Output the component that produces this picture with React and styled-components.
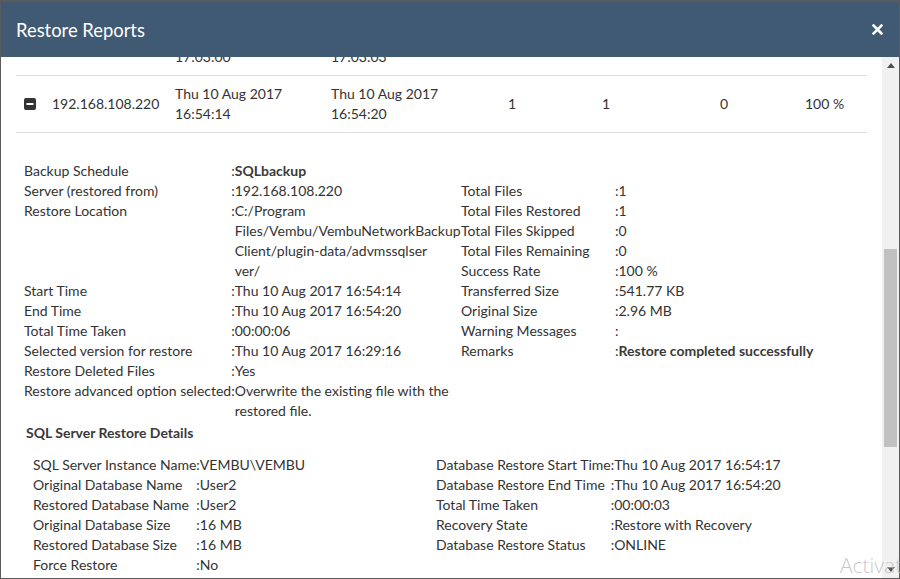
import React from "react";
import styled, { createGlobalStyle } from "styled-components";

const Global = createGlobalStyle`
  html, body { margin: 0; padding: 0; background: #5b5b5b; }
  body { font-family: Lato, "Open Sans", sans-serif; }
`;

const Page = styled.div`
  position: relative;
  width: 900px;
  height: 579px;
  overflow: hidden;
  background: #5b5b5b;
`;

const Modal = styled.div`
  margin: 2px 1px 0 1px;
  height: 576px;
  display: flex;
  flex-direction: column;
  background: #fff;
`;

const Header = styled.div`
  height: 55px;
  flex: none;
  background: #3f5a72;
  display: flex;
  align-items: center;
  justify-content: space-between;
  padding: 0 15px 0 15px;
  box-sizing: border-box;
`;

const Title = styled.h1`
  margin: 0;
  font-family: Lato, sans-serif;
  font-weight: 400;
  font-size: 18.4px;
  color: #fff;
`;

const CloseButton = styled.button`
  border: 0;
  background: none;
  padding: 0;
  width: 14px;
  height: 14px;
  display: flex;
  align-items: center;
  justify-content: center;
  cursor: pointer;
`;

const Body = styled.div`
  flex: 1;
  display: flex;
  overflow: hidden;
  min-height: 0;
`;

const Content = styled.div`
  flex: 1;
  overflow: hidden;
  padding: 0 15px;
  color: #333;
  font-size: 14px;
  line-height: 20px;
`;

const Scrolled = styled.div`
  margin-top: -39px;
`;

const ScrollTrack = styled.div`
  width: 17px;
  flex: none;
  background: #f1f1f1;
  display: flex;
  flex-direction: column;
  align-items: center;
`;

const ArrowBtn = styled.div`
  height: 17px;
  width: 17px;
  display: flex;
  align-items: center;
  justify-content: center;
  flex: none;
`;

const Thumb = styled.div`
  margin-top: 175px;
  width: 13px;
  height: 198px;
  background: #c1c1c1;
  flex: none;
`;

const Spacer = styled.div`
  flex: 1;
`;

const Row = styled.div`
  display: grid;
  grid-template-columns: 36px 123px 156px 177px 94px 118px 85px 1fr;
  border-top: 1px solid #dddddd;
  padding: 8px 0;
  align-items: center;
  &:last-child {
    border-bottom: 1px solid #dddddd;
  }
`;

const IconCell = styled.div`
  padding-left: 8px;
  display: flex;
  align-items: center;
`;

const Cell = styled.div`
  white-space: nowrap;
`;

const Details = styled.div`
  margin-top: 28px;
  padding-left: 8px;
  display: grid;
  grid-template-columns: 437px 1fr;
`;

const KV = styled.div`
  display: grid;
  grid-template-columns: ${(p) => p.$label || "max-content"} max-content max-content;
  align-content: start;
  padding-top: ${(p) => p.$offset || 0}px;
`;

const Label = styled.div`
  white-space: nowrap;
`;

const Colon = styled.div``;

const Value = styled.div`
  white-space: nowrap;
  font-weight: ${(p) => (p.$strong ? 700 : 400)};
  color: ${(p) => (p.$strong ? "#3a3a3a" : "inherit")};
`;

const SectionTitle = styled.div`
  margin-top: 2px;
  padding-left: 10px;
  font-weight: 700;
  color: #3a3a3a;
`;

const SubGrid = styled.div`
  margin-top: 12px;
  padding-left: 17px;
  display: grid;
  grid-template-columns: 403px 1fr;
`;

const Watermark = styled.div`
  position: absolute;
  left: 840px;
  top: 551px;
  font-family: "Open Sans", sans-serif;
  font-weight: 300;
  font-size: 21px;
  color: rgba(190, 190, 190, 0.85);
  white-space: nowrap;
  pointer-events: none;
`;

const MinusIcon = () => (
  <svg width="12" height="12" viewBox="0 0 12 12">
    <rect x="0" y="0" width="12" height="12" rx="2" fill="#333" />
    <rect x="2.5" y="5" width="7" height="2" fill="#fff" />
  </svg>
);

const PlusIcon = () => (
  <svg width="12" height="12" viewBox="0 0 12 12">
    <rect x="0" y="0" width="12" height="12" rx="2" fill="#333" />
    <rect x="2.5" y="5" width="7" height="2" fill="#fff" />
    <rect x="5" y="2.5" width="2" height="7" fill="#fff" />
  </svg>
);

const rows = [
  { open: false, ip: "192.168.108.220", start: ["Thu 10 Aug 2017", "17:03:00"], end: ["Thu 10 Aug 2017", "17:03:03"], a: "1", b: "1", c: "0", rate: "100 %" },
  { open: true, ip: "192.168.108.220", start: ["Thu 10 Aug 2017", "16:54:14"], end: ["Thu 10 Aug 2017", "16:54:20"], a: "1", b: "1", c: "0", rate: "100 %" },
];

const mainLeft = [
  ["Backup Schedule", "SQLbackup", true],
  ["Server (restored from)", "192.168.108.220"],
  ["Restore Location", ["C:/Program", "Files/Vembu/VembuNetworkBackup", "Client/plugin-data/advmssqlser", "ver/"]],
  ["Start Time", "Thu 10 Aug 2017 16:54:14"],
  ["End Time", "Thu 10 Aug 2017 16:54:20"],
  ["Total Time Taken", "00:00:06"],
  ["Selected version for restore", "Thu 10 Aug 2017 16:29:16"],
  ["Restore Deleted Files", "Yes"],
  ["Restore advanced option selected", ["Overwrite the existing file with the", "restored file."]],
];

const mainRight = [
  ["Total Files", "1"],
  ["Total Files Restored", "1"],
  ["Total Files Skipped", "0"],
  ["Total Files Remaining", "0"],
  ["Success Rate", "100 %"],
  ["Transferred Size", "541.77 KB"],
  ["Original Size", "2.96 MB"],
  ["Warning Messages", ""],
  ["Remarks", "Restore completed successfully", true],
];

const subLeft = [
  ["SQL Server Instance Name", "VEMBU\\VEMBU"],
  ["Original Database Name", "User2"],
  ["Restored Database Name", "User2"],
  ["Original Database Size", "16 MB"],
  ["Restored Database Size", "16 MB"],
  ["Force Restore", "No"],
];

const subRight = [
  ["Database Restore Start Time", "Thu 10 Aug 2017 16:54:17"],
  ["Database Restore End Time", "Thu 10 Aug 2017 16:54:20"],
  ["Total Time Taken", "00:00:03"],
  ["Recovery State", "Restore with Recovery"],
  ["Database Restore Status", "ONLINE"],
];

const KVTable = ({ items, label, offset }) => (
  <KV $label={label} $offset={offset}>
    {items.map(([k, v, strong]) => (
      <React.Fragment key={k}>
        <Label>{k}</Label>
        <Colon>:</Colon>
        <Value $strong={strong}>
          {Array.isArray(v)
            ? v.map((line, i) => (
                <React.Fragment key={i}>
                  {line}
                  {i < v.length - 1 && <br />}
                </React.Fragment>
              ))
            : v}
        </Value>
      </React.Fragment>
    ))}
  </KV>
);

export default function App() {
  return (
    <Page>
      <Global />
      <Modal>
        <Header>
          <Title>Restore Reports</Title>
          <CloseButton aria-label="close">
            <svg width="11" height="11" viewBox="0 0 11 11">
              <path d="M1.5 1.5 L9.5 9.5 M9.5 1.5 L1.5 9.5" stroke="#fff" strokeWidth="2.6" strokeLinecap="square" />
            </svg>
          </CloseButton>
        </Header>
        <Body>
          <Content>
            <Scrolled>
              <div>
                {rows.map((r, i) => (
                  <Row key={i}>
                    <IconCell>{r.open ? <MinusIcon /> : <PlusIcon />}</IconCell>
                    <Cell>{r.ip}</Cell>
                    <Cell>
                      {r.start[0]}
                      <br />
                      {r.start[1]}
                    </Cell>
                    <Cell>
                      {r.end[0]}
                      <br />
                      {r.end[1]}
                    </Cell>
                    <Cell>{r.a}</Cell>
                    <Cell>{r.b}</Cell>
                    <Cell>{r.c}</Cell>
                    <Cell>{r.rate}</Cell>
                  </Row>
                ))}
              </div>
              <Details>
                <KVTable items={mainLeft} />
                <KVTable items={mainRight} label="154px" offset={20} />
              </Details>
              <SectionTitle>SQL Server Restore Details</SectionTitle>
              <SubGrid>
                <KVTable items={subLeft} />
                <KVTable items={subRight} />
              </SubGrid>
            </Scrolled>
          </Content>
          <ScrollTrack>
            <ArrowBtn>
              <svg width="8" height="5" viewBox="0 0 8 5">
                <path d="M0 5 L4 0 L8 5 Z" fill="#505050" />
              </svg>
            </ArrowBtn>
            <Thumb />
            <Spacer />
            <ArrowBtn>
              <svg width="8" height="5" viewBox="0 0 8 5">
                <path d="M0 0 L4 5 L8 0 Z" fill="#505050" />
              </svg>
            </ArrowBtn>
          </ScrollTrack>
        </Body>
      </Modal>
      <Watermark>Activate Windows</Watermark>
    </Page>
  );
}
